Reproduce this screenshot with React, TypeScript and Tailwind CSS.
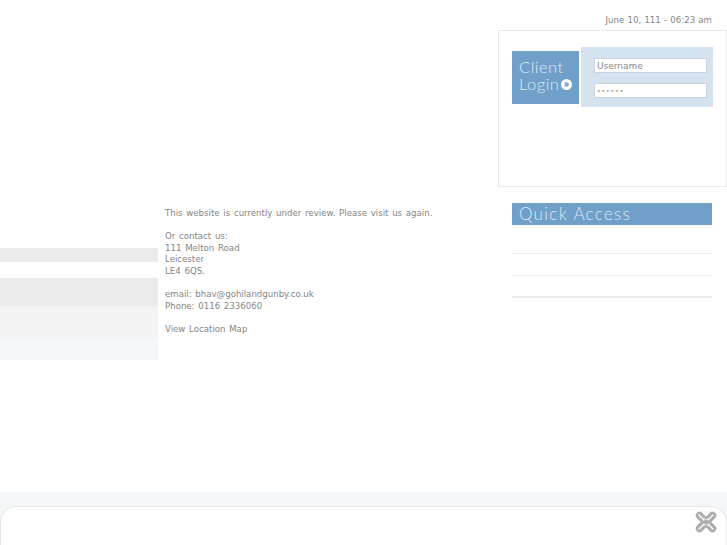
import React from 'react';

const bodyFont = "font-['DejaVu_Sans',sans-serif]";
const titleFont = "font-['Lato',sans-serif]";

function KnotIcon() {
    return (
        <svg width="22" height="22" viewBox="0 0 22 22" fill="none">
            <g strokeLinecap="round">
                <path d="M4.5 4.5 L17.5 17.5 M17.5 4.5 L4.5 17.5" stroke="#adadad" strokeWidth="7.5" />
                <path d="M4 4 L9 9 M13 13 L18 18 M18 4 L13 9 M9 13 L4 18" stroke="#ffffff" strokeWidth="1.3" />
                <path d="M9 7 L11 9 L13 7 M9 15 L11 13 L13 15" stroke="#e4e4e4" strokeWidth="1" />
            </g>
        </svg>
    );
}

function LoginBox() {
    return (
        <div className="ml-[498px] h-[157px] border border-[#e9e9e9] bg-white pt-[16px] pl-[13px]">
            <div className="flex items-center gap-[2px]">
                <div className={`w-[67px] h-[53px] bg-[#709fc9] pl-[7px] pt-[8px] text-[16.5px] leading-[17px] text-[#dfe9f3] tracking-[0.5px] font-light ${titleFont}`}>
                    <div>Client</div>
                    <div className="flex items-center gap-[2px]">
                        Login
                        <span className="flex items-center justify-center w-[11px] h-[11px] rounded-full bg-white">
                            <svg width="7" height="7" viewBox="0 0 7 7" fill="none" stroke="#709fc9" strokeWidth="1.2">
                                <path d="M1.5 1.5 L3.5 3.5 L1.5 5.5 M3.5 1.5 L5.5 3.5 L3.5 5.5" />
                            </svg>
                        </span>
                    </div>
                </div>
                <div className="flex flex-col gap-[10px] w-[132px] h-[60px] bg-[#d5e2ef] pl-[13px] pr-[6px] pt-[11px]">
                    <input
                        readOnly
                        value="Username"
                        className={`w-full h-[15px] bg-white border border-[#ccd2d8] px-[2px] text-[9px] text-[#8a8a8a] outline-none ${bodyFont}`}
                    />
                    <input
                        readOnly
                        type="password"
                        value="123456"
                        className={`w-full h-[15px] bg-white border border-[#ccd2d8] px-[2px] text-[6px] text-[#8a8a8a] tracking-[1px] outline-none ${bodyFont}`}
                    />
                </div>
            </div>
        </div>
    );
}

function Sidebar() {
    return (
        <div className="w-[158px] shrink-0 pt-[61px]">
            <div className="h-[14px] bg-[#ebebeb]" />
            <div className="h-[16px]" />
            <div className="h-[28px] bg-[#ebebeb]" />
            <div className="h-[34px] bg-[#f3f3f3]" />
            <div className="h-[20px] bg-[#f5f8fb]" />
        </div>
    );
}

function Message() {
    return (
        <div className={`w-[347px] shrink-0 pl-[7px] pt-[21px] text-[8.6px] leading-[11.6px] [word-spacing:1px] text-[#858585] ${bodyFont}`}>
            <p>This website is currently under review. Please visit us again.</p>
            <br />
            <p>Or contact us:</p>
            <p>111 Melton Road</p>
            <p>Leicester</p>
            <p>LE4 6QS.</p>
            <br />
            <p>email: bhav@gohilandgunby.co.uk</p>
            <p>Phone: 0116 2336060</p>
            <br />
            <p>View Location Map</p>
        </div>
    );
}

function QuickAccess() {
    return (
        <div className="w-[200px] ml-[7px] pt-[16px]">
            <div className={`h-[22px] bg-[#709fc9] pl-[7px] text-[17px] leading-[22px] text-[#dfe9f3] tracking-[1.3px] font-light ${titleFont}`}>
                Quick Access
            </div>
            <div className="h-[29px] border-b border-[#ececec]" />
            <div className="h-[22px] border-b border-[#ececec]" />
            <div className="h-[22px] border-b-2 border-[#ececec]" />
        </div>
    );
}

export default function App() {
    return (
        <div className="flex flex-col h-[545px] w-[727px] overflow-hidden bg-white">
            <div className={`h-[30px] pt-[15px] pr-[15px] text-right text-[8.6px] leading-[11px] [word-spacing:0.5px] text-[#858585] ${bodyFont}`}>
                June 10, 111 - 06:23 am
            </div>
            <LoginBox />
            <div className="flex">
                <Sidebar />
                <Message />
                <QuickAccess />
            </div>
            <div className="mt-auto h-[53px] bg-gradient-to-b from-[#f4f8fb] to-[#f5f6f6] pt-[14px]">
                <div className="flex justify-end h-full rounded-t-[16px] border border-b-0 border-[#ece7e2] bg-white pt-[4px] pr-[9px]">
                    <KnotIcon />
                </div>
            </div>
        </div>
    );
}
